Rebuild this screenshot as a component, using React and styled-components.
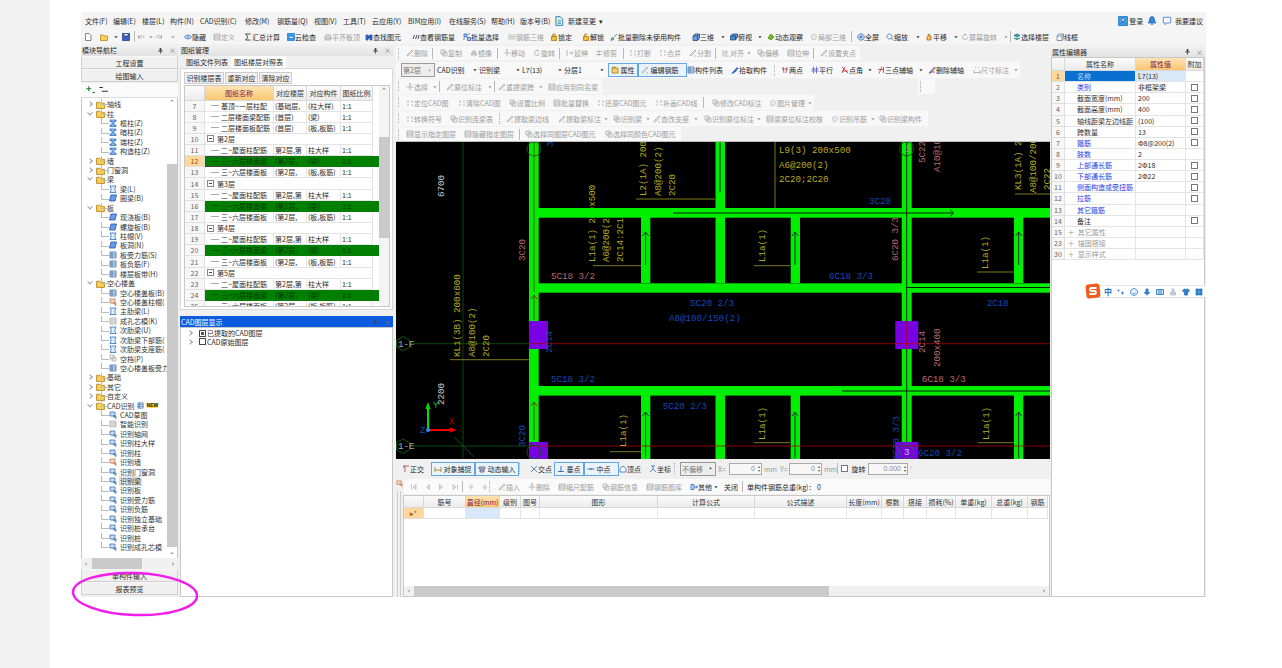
import React from 'react';
import styled, { createGlobalStyle } from 'styled-components';

const GlobalStyle = createGlobalStyle`
  html, body { margin: 0; padding: 0; background: #fff; overflow: hidden; }
  * { box-sizing: border-box; }
  body { font-family: "Noto Sans CJK SC", "Noto Sans", sans-serif; font-size: 7px; color: #2a2a2a; }
`;

// little toolbar pictures, all in an 8x8 box
const G = {
  doc: { d: 'M1.5.5h3.5l2 2v5h-5.5z', s: '#667', f: '#fff' },
  folder: { d: 'M.5 2h3l1 1h3v4.5h-7z', s: '#b88a20', f: '#f6cf5a' },
  save: { d: 'M.5.5h7v7h-7zM2 .5v2.5h4V.5', s: '#23408a', f: '#3a62c0' },
  undo: { d: 'M2 4.5C3 2 6 2 7 5M1.5 2v3h3', s: '#999' },
  redo: { d: 'M6 4.5C5 2 2 2 1 5M6.5 2v3h-3', s: '#999' },
  eye: { d: 'M.5 4C2 1.5 6 1.5 7.5 4 6 6.5 2 6.5.5 4zM4 3v2', s: '#2a70c0', f: '#cfe4f8' },
  page: { d: 'M1 1h6v6H1zM1 3h6M1 5h6', s: '#aaa', f: '#eee' },
  sig: { d: 'M6.5 1H1.5L4 4 1.5 7h5', s: '#222' },
  cloud: { d: 'M.5.5h7v7h-7zM2 5.5h4C7 4 5.5 3 4.5 3.5 3.5 2.5 2 3.5 2 5.5z', s: '#1f7fd0', f: '#3a9ae8' },
  wall: { d: 'M1 7V3l3-2 3 2v4zM1 5h6', s: '#aaa', f: '#ddd' },
  binoc: { d: 'M1 2h2v5H1zM5 2h2v5H5zM3 3h2v2H3z', s: '#1d4fa8', f: '#3f7ad8' },
  bars: { d: 'M1 6l1.5-4M3.5 6L5 2M6 6l1-4', s: '#224' },
  sel: { d: 'M1 1h3v3H1zM4.5 4.5h3v3h-3zM5 1h2M1 5v2', s: '#2a60b8', f: '#a8c8f0' },
  grid: { d: 'M1 1v6M3 1v6M5 1v6M7 1v6M1 4h6', s: '#bbb' },
  lock: { d: 'M2.5 3.5V2.2C2.5.5 5.5.5 5.5 2.2v1.3M1.5 3.5h5v4h-5z', s: '#a87810', f: '#f2c040' },
  unlock: { d: 'M2.5 3.5V2C2.5.6 5 .6 5.3 1.6M1.5 3.5h5v4h-5z', s: '#a87810', f: '#f2c040' },
  broom: { d: 'M7 1L3.5 4.5M1 7.5l1-3 2 1.5-3 1.5', s: '#2a70c0', f: '#e8c040' },
  cube: { d: 'M1 3l2-2h4.5v4.5l-2 2H1zM1 3h4.5v4.5M5.5 3l2-2', s: '#24508c', f: '#6f9ed8' },
  box: { d: 'M.5 3l2-2h5v3l-2 3H.5zM.5 3h5v4', s: '#24508c', f: '#4f86cc' },
  orbit: { d: 'M1 5l3-4 3 3-3 3z', s: '#4a8a18', f: '#78b828' },
  part: { d: 'M1.5 2.5l3-1.5 2 2-1 3-3 1z', s: '#bbb', f: '#eee' },
  fit: { d: 'M4 .8a3.2 3.2 0 1 0 .01 0zM4 2v4M2 4h4M6.5 6.5L7.8 7.8', s: '#2a60a8', f: '#d8e8f8' },
  mag: { d: 'M3.5 1a2.5 2.5 0 1 0 .01 0zM5.3 5.3L7.5 7.5', s: '#3a70b0', f: '#eef6ff' },
  hand: { d: 'M2 7V4h1V1.5h1.5V3H6v4z', s: '#a86810', f: '#f4c868' },
  rot: { d: 'M6.5 4A2.5 2.5 0 1 1 4 1.5H5M4.5.5l1 1-1 1', s: '#aaa' },
  layer: { d: 'M1 2.5L4 1l3 1.5L4 4zM1 5l3 1.5L7 5', s: '#187a70', f: '#38a0d0' },
  wire: { d: 'M1 3l1.5-2h5v4.5L6 7.5H1zM1 3h5v4.5M6 3l1.5-2', s: '#5a80b0' },
  pen: { d: 'M1 7l1-2 4-4 1 1-4 4zM5 7h2', s: '#aaa', f: '#eee' },
  copy: { d: 'M1 1h4v4H1zM3 3h4v4H3z', s: '#aaa', f: '#f4f4f4' },
  mirror: { d: 'M4 .5v7M3 2L1 6h2zM5 2l2 4H5z', s: '#aaa' },
  move: { d: 'M4 .5v7M.5 4h7M2.8 1.6L4 .5l1.2 1.1', s: '#aaa' },
  ext: { d: 'M1 1v6M3 4h4M5.5 2.5L7 4 5.5 5.5', s: '#aaa' },
  trim: { d: 'M4 .5v7M1 2.5h6M1 5.5h6', s: '#aaa' },
  brk: { d: 'M1 3h2M5 3h2M1 6h2M5 6h2M2 1v1M6 1v1', s: '#aaa' },
  align: { d: 'M1 1v6h6M3 2h2v3H3z', s: '#aaa' },
  lines: { d: 'M1 1h6v6H1zM1 3h6M1 5h6M3 1v6', s: '#3b6ea8', f: '#eef4fb' },
  pick: { d: 'M1 7.5L3 5 6 1.5l1 1L4 6z', s: '#1d58b0', f: '#3a7ee0' },
  axis2: { d: 'M2 1l1 6M6 1L5 7M1 3h6', s: '#a04050' },
  par: { d: 'M2.5.5v7M5.5.5v7M.5 3h7M.5 5h7', s: '#5060c0' },
  ang: { d: 'M1 7l3-6M1 1l6 6M1 5h6', s: '#c02840' },
  tri: { d: 'M1 3.5h6M5 .5L2 7.5M6.5 1v6', s: '#d03030' },
  del: { d: 'M1 7L6.5 1l1 1L2 7.5zM2 6h5', s: '#6050b0', f: '#e8d050' },
  dim: { d: 'M1 6.5h6M1 4v4M7 4v4M2 1.5h1M5 1.5h1', s: '#aaa' },
  cross: { d: 'M1 1l6 6M7 1L1 7', s: '#2a70c0' },
  perp: { d: 'M1 6.5h6M4 1v5.5', s: '#1a50a0' },
  mid: { d: 'M.5 4h7M4 3v2', s: '#1a50a0' },
  house: { d: 'M4 1l3 2.5V7H1V3.5z', s: '#2a70c0', f: '#fff' },
  coord: { d: 'M4 1v3M1 7l3-3 3 3M2 1h4', s: '#2a70c0' },
  ortho: { d: 'M1 1h6M3 1v6M1 3l2-2', s: '#b04050' },
  snap: { d: 'M1 7V2M7 7V2M1 5h6', s: '#a87810', f: '#f2d070' },
  dyn: { d: 'M1 2h6v2H1zM2 5h4v2H2z', s: '#557', f: '#ccd' },
  first: { d: 'M1.5 1.5v5M6 1.5L3 4l3 2.5z', s: '#bbb', f: '#ddd' },
  prev: { d: 'M5.5 1.5L2.5 4l3 2.5z', s: '#bbb', f: '#ddd' },
  next: { d: 'M2.5 1.5L5.5 4l-3 2.5z', s: '#bbb', f: '#ddd' },
  last: { d: 'M6.5 1.5v5M2 1.5L5 4 2 6.5z', s: '#bbb', f: '#ddd' },
  up: { d: 'M4 1.5L2 4h4zM4 4v3', s: '#bbb' },
  down: { d: 'M4 6.5L2 4h4zM4 4V1', s: '#bbb' },
  other: { d: 'M1 1.5h3v5H1zM4 4h3.5M6 2.5L7.5 4 6 5.5', s: '#2a70c0', f: '#bcd8f4' },
  attr: { d: 'M1 2h6v5H1zM1 2l1-1h2l1 1', s: '#a87810', f: '#f4d070' },
  drop: { d: 'M2.4 3.2h3.2L4 5.2z', f: '#333' },
  dropDim: { d: 'M2.4 3.2h3.2L4 5.2z', f: '#999' },
  plus: { d: 'M3 1v4M1 3h4M6 6h2', s: '#187a30' },
  minus: { d: 'M1 2h3M3 5h5', s: '#334' },
  pil: { d: 'M1 1h6v1.5H5V6h2v1.5H1V6h2V2.5H1z', s: '#3070c0', f: '#8fc0f0' },
  beam: { d: 'M1 1h6l-1 2.5v2l1 2H1l1-2v-2z', s: '#3070c0', f: '#dceeff' },
  slab: { d: 'M2 1h5.5L6 7H.5z', s: '#2050b0', f: '#6a9ae8' },
  cad: { d: 'M1 1h5v4H1zM4 5l3 2.5V5z', s: '#3a70b0', f: '#c8dcf4' },
  wallp: { d: 'M1 1h5v4H1zM4 5l3 2.5V5z', s: '#c07850', f: '#f4d8c0' },
  pin: { d: 'M3 1h2v3h1.5v1h-2v2.5H3.5V5h-2V4H3z', f: '#444' },
  bell: { d: 'M4 .5C2 .5 2 3 2 4L1 5.500h6L6 4C6 3 6 .5 4 .5zM3 6.500h2', s: '#1f6fc0', f: '#3a88d8' },
  user: { d: 'M.5.5h7v7h-7zM4 1.800a1.200 1.200 0 1 0 .01 0zM2 6.500c0-2 4-2 4 0', s: '#1f78c8', f: '#4aa0e0' },
  note: { d: 'M1 1h6v4.500H4L2.500 7V5.500H1z', s: '#5a90d0', f: '#f4f8fc' },
  newdoc: { d: 'M1.500.5h3.500l2 2v5h-5.500zM3 4h2.500M3 5.800h2.500', s: '#2f8ad0', f: '#dff0c8' },
};

const Svg = styled.svg`
  flex: 0 0 ${p => p.$s}px;
  width: ${p => p.$s}px;
  height: ${p => p.$s}px;
  display: block;
`;

const Glyph = ({ k, size = 8 }) => {
  const g = G[k];
  if (!g) return null;
  return (
    <Svg $s={size} viewBox="0 0 8 8">
      <path d={g.d} fill={g.f || 'none'} stroke={g.s || 'none'} strokeWidth=".8" />
    </Svg>
  );
};

// turn x positions read off the screen into item widths
const spaced = (list, end) => list.map((it, i) => ({
  x: it[0], k: it[1], t: it[2], o: it[3] || {},
  w: (i + 1 < list.length ? list[i + 1][0] : end) - it[0],
}));

// STYLES -------------

const Page = styled.div`
  display: flex;
  height: 668px;
`;
const SideStripe = styled.div`
  flex: 0 0 50px;
  background: #f1f1f1;
`;
const Main = styled.div`
  padding: 12px 0 0 31px;
`;
const Win = styled.div`
  position: relative;
  width: 1125px;
  height: 585px;
  background: #f0f0f0;
  display: flex;
  flex-direction: column;
  filter: blur(.5px);
`;
const MenuBar = styled.div`
  flex: 0 0 17px;
  display: flex;
  align-items: center;
  padding-left: 4px;
  background: #f4f4f4;
`;
const MenuItem = styled.span`
  flex: 0 0 ${p => p.$w}px;
  white-space: nowrap;
  display: flex;
  align-items: center;
`;
const RightMenu = styled.div`
  margin-left: auto;
  display: flex;
  align-items: center;
  gap: 1px;
  padding-right: 3px;
`;
const TopBar = styled.div`
  flex: 0 0 15px;
  display: flex;
  align-items: center;
  padding-left: 3px;
  background: #f5f5f5;
`;
const Body = styled.div`
  flex: 1;
  display: flex;
  min-height: 0;
`;

const Tool = styled.span`
  flex: 0 0 ${p => p.$w}px;
  display: flex;
  align-items: center;
  white-space: nowrap;
  color: ${p => (p.$dim ? '#9c9c9c' : '#262626')};
`;
const BoxTool = styled.span`
  flex: 0 0 ${p => p.$w}px;
  height: 14px;
  display: flex;
  align-items: center;
  padding-left: 2px;
  white-space: nowrap;
  border: 1px solid #62a6e4;
  background: #eaf2fa;
  color: #262626;
`;
const Sep = styled.i`
  flex: 0 0 ${p => p.$w}px;
  height: 11px;
  display: block;
  background: linear-gradient(#b8b8b8, #b8b8b8) left center / 1px 100% no-repeat;
`;
const Handle = styled.i`
  flex: 0 0 ${p => p.$w}px;
  height: 11px;
  display: block;
  background: repeating-linear-gradient(#aaa 0 1px, transparent 1px 2px) left center / 1px 100% no-repeat;
`;
const SelectBox = styled.span`
  flex: 0 0 ${p => p.$w}px;
  height: 14px;
  display: flex;
  align-items: center;
  justify-content: space-between;
  padding: 0 1px;
  border: 1px solid #999;
  background: #ededed;
  color: #777;
`;

const Col = styled.div`
  flex: 0 0 ${p => p.$w}px;
  margin-right: ${p => p.$mr || 0}px;
  padding-top: ${p => p.$pt || 0}px;
  display: flex;
  flex-direction: column;
  min-height: 0;
  min-width: 0;
`;
const TitleBar = styled.div`
  flex: 0 0 ${p => p.$h || 12}px;
  display: flex;
  align-items: center;
  justify-content: space-between;
  padding: 0 2px 0 1px;
  background: ${p => (p.$active ? '#0c5ce0' : 'linear-gradient(#f2f2f2, #e2e2e2)')};
  color: ${p => (p.$active ? '#fff' : '#2a2a2a')};
`;
const TitleBtns = styled.span`
  display: flex;
  align-items: center;
  gap: 5px;
  color: #777;
`;

const NavBtn = styled.div`
  flex: 0 0 13px;
  display: flex;
  align-items: center;
  justify-content: center;
  background: #f0f0f0;
  border: 1px solid #d0d0d0;
  border-top-color: #f8f8f8;
`;
const TreeTools = styled.div`
  flex: 0 0 15px;
  display: flex;
  align-items: center;
  gap: 3px;
  padding-left: 4px;
  background: #fafafa;
  border-bottom: 1px solid #ddd;
  margin-top: 1px;
`;
const TreeBox = styled.div`
  flex: 0 0 460px;
  display: flex;
  background: #fff;
  border-left: 1px solid #c8c8c8;
  border-right: 1px solid #c8c8c8;
`;
const TreeList = styled.div`
  flex: 1;
  padding-top: 1.4px;
  overflow: hidden;
  min-width: 0;
`;
const TreeRow = styled.div`
  position: relative;
  height: 9.43px;
  display: flex;
  align-items: center;
  gap: ${p => (p.$lv ? 2 : 1)}px;
  white-space: nowrap;
  padding-left: ${p => (p.$lv ? 27 : 6)}px;
  color: #333;
  &::before {
    content: '${p => (p.$lv ? ' ' : '')}';
    position: absolute;
    left: 19px;
    top: 0;
    width: 7px;
    height: 5px;
    border-left: 1px solid #bbb;
    border-bottom: 1px solid #bbb;
  }
`;
const Chevron = styled.i`
  flex: 0 0 4px;
  width: 4px;
  height: 4px;
  margin-right: 3px;
  border-right: 1px solid #999;
  border-bottom: 1px solid #999;
  transform: ${p => (p.$open ? 'rotate(45deg) translate(-1px,-1px)' : 'rotate(-45deg)')};
`;
const TreeLabel = styled.span`
  background: ${p => (p.$sel ? '#e2e2e2' : 'transparent')};
  padding: 0 1px;
`;
const NewMark = styled.span`
  display: flex;
  align-items: flex-start;
  margin-left: 2px;
  font: bold 5px "Liberation Sans", sans-serif;
  color: #111;
  background: #f0e040;
  line-height: 5px;
`;
const VBar = styled.div`
  flex: 0 0 ${p => p.$w}px;
  display: flex;
  flex-direction: column;
  align-items: stretch;
  background: ${p => p.$bg || '#fff'};
`;
const VThumb = styled.div`
  flex: 0 0 ${p => p.$h}px;
  margin-top: ${p => p.$top}px;
  background: #cacaca;
`;
const Arrow = styled.div`
  flex: 0 0 10px;
  display: flex;
  align-items: center;
  justify-content: center;
  font: 7px "DejaVu Sans", sans-serif;
  color: #666;
  background: ${p => p.$bg || 'transparent'};
`;
const HBar = styled.div`
  flex: 0 0 ${p => p.$h || 10}px;
  display: flex;
  align-items: center;
  background: #f0f0f0;
  margin-top: ${p => (p.$auto ? 'auto' : '0')};
`;
const HThumb = styled.div`
  flex: 0 0 ${p => p.$w}px;
  margin-left: ${p => p.$ml || 0}px;
  height: 100%;
  background: #cacaca;
`;
const HEnd = styled.div`
  margin-left: auto;
  flex: 0 0 10px;
  font: 7px "DejaVu Sans", sans-serif;
  text-align: center;
  color: #555;
`;

const Tabs = styled.div`
  flex: 0 0 12px;
  display: flex;
  align-items: stretch;
  padding-left: 3px;
  background: #f0f0f0;
`;
const Tab = styled.div`
  display: flex;
  align-items: center;
  padding: 0 3px;
  background: ${p => (p.$on ? '#fff' : 'transparent')};
`;
const ManagerBody = styled.div`
  flex: 1;
  min-height: 0;
  padding: 3px 2px 2px 3px;
  background: #fff;
  border: 1px solid #d8d8d8;
  display: flex;
  flex-direction: column;
  overflow: hidden;
`;
const SmallBtns = styled.div`
  flex: 0 0 12px;
  display: flex;
  gap: 1px;
  margin-bottom: 1px;
`;
const SmallBtn = styled.div`
  flex: 0 0 ${p => p.$w}px;
  display: flex;
  align-items: center;
  justify-content: center;
  background: #f2f2f2;
  border: 1px solid #ccc;
`;
const GridWrap = styled.div`
  flex: 1;
  min-height: 0;
  display: flex;
  border: 1px solid #c8c8c8;
  overflow: hidden;
`;
const GridMain = styled.div`
  flex: 1;
  min-width: 0;
  overflow: hidden;
`;
const Row = styled.div`
  display: flex;
  height: ${p => p.$h || 11.15}px;
  background: ${p => (p.$green ? '#008000' : '#fff')};
  color: ${p => (p.$green ? '#013a01' : 'inherit')};
`;
const Cell = styled.div`
  flex: 0 0 ${p => p.$w}px;
  display: flex;
  align-items: center;
  justify-content: ${p => (p.$center ? 'center' : 'flex-start')};
  padding-left: ${p => (p.$center ? 0 : p.$pl || 1)}px;
  white-space: nowrap;
  overflow: hidden;
  border-right: 1px solid ${p => (p.$green ? '#0a7a0a' : '#e4e4e4')};
  border-bottom: 1px solid ${p => (p.$green ? '#0a7a0a' : '#e4e4e4')};
  background: ${p => p.$bg || 'transparent'};
  color: ${p => p.$c || 'inherit'};
  outline: ${p => (p.$ring ? '1px solid #444' : 'none')};
  outline-offset: -1px;
`;
const Head = styled(Cell)`
  background: ${p => (p.$on ? 'linear-gradient(#fde4b4, #f9c66e)' : 'linear-gradient(#fbfbfb, #ececec)')};
  color: ${p => (p.$on ? '#7d1a55' : '#333')};
  border-color: #d8d8d8;
`;
const NumCell = styled(Cell)`
  background: ${p => (p.$on ? '#fdd79c' : '#f7f7f7')};
  color: ${p => (p.$on ? '#a05010' : '#666')};
  border-color: #e0e0e0;
`;
const Dash = styled.i`
  flex: 0 0 ${p => p.$w}px;
  height: 1px;
  margin-right: 2px;
  background: ${p => p.$c || '#aaa'};
`;
const Expand = styled.i`
  flex: 0 0 7px;
  height: 7px;
  margin: 0 3px 0 1px;
  border: 1px solid #888;
  background: linear-gradient(#444, #444) center / 3px 1px no-repeat, #fff;
`;

const LayerBody = styled.div`
  flex: 1;
  padding: 1px 0 0 7px;
  background: #fff;
  border: 1px solid #c8c8c8;
`;
const LayerRow = styled.div`
  height: 8.5px;
  display: flex;
  align-items: center;
  gap: 1px;
`;
const LayerBox = styled.i`
  flex: 0 0 7px;
  height: 7px;
  margin-left: 3px;
  border: 1px solid #444;
  background: ${p => (p.$on ? 'linear-gradient(#555, #555) center / 3px 3px no-repeat, #fff' : '#fff')};
`;

const ToolRow = styled.div`
  flex: 0 0 ${p => p.$h}px;
  margin-bottom: ${p => p.$mb || 0}px;
  display: flex;
  align-items: stretch;
`;
const Strip = styled.div`
  display: flex;
  align-items: center;
  padding-left: ${p => p.$pl}px;
  background: #f8f8f8;
`;
const FloatGrip = styled.div`
  flex: 0 0 17px;
  margin-left: ${p => p.$ml}px;
  padding: 2px 0 0 2px;
  background: #f9f9f9;
`;
const Canvas = styled.div`
  flex: 0 0 318px;
  background: #000;
  border-top: 1px solid #bbb;
`;
const CadSvg = styled.svg`
  display: block;
  width: 654px;
  height: 317px;
`;
const SnapRow = styled.div`
  flex: 0 0 15px;
  margin: 2px 0 3px;
  display: flex;
  align-items: center;
  padding-left: 6px;
`;
const SpinBox = styled.span`
  flex: 0 0 ${p => p.$w}px;
  height: 12px;
  display: flex;
  align-items: center;
  justify-content: flex-end;
  gap: 3px;
  padding-right: 1px;
  border: 1px solid #aaa;
  background: #f7f7f7;
  color: #888;
  font-family: "Liberation Sans", sans-serif;
`;
const SpinArrows = styled.span`
  display: flex;
  flex-direction: column;
  font: 4px/4px "DejaVu Sans", sans-serif;
  color: #555;
`;
const Unit = styled.span`
  flex: 0 0 ${p => p.$w}px;
  color: ${p => (p.$dark ? '#262626' : '#999')};
  white-space: nowrap;
  padding-left: 2px;
`;
const CheckBox = styled.i`
  flex: 0 0 7px;
  height: 7px;
  display: block;
  border: 1px solid #777;
  background: #fff;
`;
const SteelArea = styled.div`
  flex: 1;
  min-height: 0;
  display: flex;
`;
const GripCol = styled.div`
  flex: 0 0 7px;
  padding: 1px 0 0 0;
  background: repeating-linear-gradient(90deg, #ccc 0 1px, transparent 1px 3px) 1px 12px / 6px 100% no-repeat;
`;
const SteelMain = styled.div`
  flex: 1;
  min-width: 0;
  display: flex;
  flex-direction: column;
`;
const SteelBar = styled.div`
  flex: 0 0 15px;
  margin-left: 1px;
  display: flex;
  align-items: center;
  padding-left: 6px;
  background: #fafafa;
`;
const SteelTable = styled.div`
  flex: 1;
  min-height: 0;
  margin-top: 1px;
  display: flex;
  flex-direction: column;
  border: 1px solid #c8c8c8;
  background: #fff;
`;
const PropBody = styled.div`
  flex: 1;
  background: #fff;
  border: 1px solid #c8c8c8;
  overflow: hidden;
`;
const ImeBar = styled.div`
  position: absolute;
  left: 1005px;
  top: 273px;
  width: 120px;
  height: 13px;
  display: flex;
  align-items: center;
  padding-left: 18px;
  gap: 5px;
  background: #fff;
  border-top: 1px solid #e6e6e6;
  border-bottom: 1px solid #dcdcdc;
`;
const ImeLogo = styled.svg`
  position: absolute;
  left: -1px;
  top: -3px;
  width: 16px;
  height: 16px;
`;
const ImeZh = styled.span`
  flex: 0 0 8px;
  font-size: 8px;
  font-weight: 700;
  color: #1d78c8;
  line-height: 8px;
`;
const Ellipse = styled.svg`
  position: absolute;
  left: -12px;
  top: 558px;
  width: 132px;
  height: 50px;
  overflow: visible;
`;

// DATA -------------

const menus = [
  ['文件(F)', 28], ['编辑(E)', 29], ['楼层(L)', 28], ['构件(N)', 30], ['CAD识别(C)', 45], ['修改(M)', 32],
  ['钢筋量(Q)', 37], ['视图(V)', 29], ['工具(T)', 29], ['云应用(Y)', 36], ['BIM应用(I)', 41], ['在线服务(S)', 42],
  ['帮助(H)', 29], ['版本号(B)', 34],
];

const d = { dim: true };
const topTools = spaced([
  [84, 'doc'], [100, 'folder'], [112, 'drop'], [122, 'save'], [134, 'sep'], [137, 'undo', '', d], [147, 'dropDim'], [154, 'redo', '', d], [168, 'dropDim'],
  [183, 'eye', '隐藏'], [212, 'page', '定义', d], [243, 'sig', '汇总计算'], [286, 'cloud', '云检查'], [323, 'wall', '平齐板顶', d], [364, 'binoc', '查找图元'],
  [411, 'bars', '查看钢筋量'], [462, 'sel', '批量选择'], [507, 'grid', '钢筋三维', d], [549, 'lock', '锁定'], [581, 'unlock', '解锁'], [609, 'broom', '批量删除未使用构件'],
  [691, 'cube', '三维'], [718, 'drop'], [729, 'box', '俯视'], [755, 'drop'], [766, 'orbit', '动态观察'], [809, 'part', '局部三维', d], [850, 'sep'],
  [856, 'fit', '全屏'], [885, 'mag', '缩放'], [913, 'drop'], [924, 'hand', '平移'], [951, 'drop'], [960, 'rot', '屏幕旋转', d], [1001, 'dropDim'], [1009, 'sep'],
  [1012, 'layer', '选择楼层'], [1055, 'wire', '线框'],
], 1082);

const row1 = spaced([
  [398, 'handle'], [406, 'pen', '删除', d], [432, 'sep'], [440, 'copy', '复制', d], [470, 'mirror', '镜像', d], [497, 'sep'], [503, 'move', '移动', d], [533, 'rot', '旋转', d], [559, 'sep'],
  [566, 'ext', '延伸', d], [595, 'trim', '修剪', d], [623, 'sep'], [629, 'brk', '打断', d], [659, 'brk', '合并', d], [689, 'pen', '分割', d], [715, 'sep'],
  [722, 'align', '对齐', d], [745, 'dropDim'], [757, 'copy', '偏移', d], [787, 'page', '拉伸', d], [813, 'sep'], [820, 'pen', '设置夹点', d],
], 860);

const row2 = spaced([
  [437, '', 'CAD识别'], [471, 'drop'], [479, '', '识别梁'], [514, 'drop'], [522, '', 'L7(13)'], [556, 'drop'], [564, '', '分层1'], [598, 'drop'],
  [608, 'attr', '属性', { box: true }], [638, 'pen', '编辑钢筋', { box: true, on: true }], [687, 'lines', '构件列表'], [731, 'pick', '拾取构件'], [774, 'handle'],
  [781, 'axis2', '两点'], [811, 'par', '平行'], [841, 'ang', '点角'], [866, 'drop'], [877, 'tri', '三点辅轴'], [917, 'drop'], [928, 'del', '删除辅轴'], [973, 'dim', '尺寸标注', d], [1012, 'dropDim'],
], 1020);

const row3 = spaced([
  [398, 'handle'], [406, 'move', '选择', d], [431, 'dropDim'], [439, 'sep'], [446, 'pen', '原位标注', d], [486, 'dropDim'], [494, 'sep'], [498, 'pen', '重提梁跨', d], [537, 'dropDim'], [548, 'page', '应用到同名梁', d],
], 602);

const row4 = spaced([
  [398, 'handle'], [406, 'brk', '定位CAD图', d], [458, 'brk', '清除CAD图', d], [509, 'copy', '设置比例', d], [553, 'page', '批量替换', d], [597, 'brk', '还原CAD图元', d],
  [655, 'brk', '补画CAD线', d], [703, 'sep'], [712, 'copy', '修改CAD标注', d], [769, 'part', '图片管理', d], [806, 'dropDim'],
], 813);

const row5 = spaced([
  [398, 'handle'], [406, 'brk', '转换符号', d], [450, 'copy', '识别连梁表', d], [499, 'handle'], [506, 'pen', '提取梁边线', d], [558, 'pen', '提取梁标注', d], [602, 'dropDim'],
  [613, 'copy', '识别梁', d], [644, 'dropDim'], [653, 'pen', '查改支座', d], [692, 'dropDim'], [704, 'copy', '识别原位标注', d], [755, 'dropDim'], [766, 'page', '梁原位标注校核', d],
  [831, 'part', '识别吊筋', d], [869, 'dropDim'], [879, 'copy', '识别梁构件', d],
], 928);

const row6 = spaced([
  [398, 'handle'], [406, 'page', '显示指定图层', d], [464, 'page', '隐藏指定图层', d], [519, 'sep'], [525, 'copy', '选择同图层CAD图元', d], [605, 'copy', '选择同颜色CAD图元', d],
], 681);

const snapLeft = spaced([
  [402, 'ortho', '正交'], [431, 'snap', '对象捕捉', { box: true }], [475, 'dyn', '动态输入', { box: true }], [519, 'handle'], [530, 'cross', '交点'],
  [554, 'perp', '垂点', { box: true }], [584, 'mid', '中点', { box: true }], [619, 'house', '顶点'], [649, 'coord', '坐标'], [674, 'handle'],
], 680);

const steelTools = spaced([
  [410, 'first'], [424, 'prev'], [437, 'next'], [451, 'last'], [462, 'sep'], [467, 'up'], [481, 'down'], [488, 'handle'], [497, 'pen', '插入', d], [527, 'move', '删除', d],
  [557, 'page', '缩尺配筋', d], [601, 'copy', '钢筋信息', d], [645, 'page', '钢筋图库', d], [689, 'other', '其他'], [708, 'drop'], [720, '', '关闭'], [738, 'sep'], [743, '', '单构件钢筋总重(kg)： 0'],
], 860);

const tree = [
  ['轴线', 0], ['柱', 0, 1], ['框柱(Z)', 1, 'pil'], ['暗柱(Z)', 1, 'pil'], ['端柱(Z)', 1, 'pil'], ['构造柱(Z)', 1, 'pil'],
  ['墙', 0], ['门窗洞', 0], ['梁', 0, 1], ['梁(L)', 1, 'beam'], ['圈梁(B)', 1, 'slab'], ['板', 0, 1], ['现浇板(B)', 1, 'slab'], ['螺旋板(B)', 1, 'slab'],
  ['柱帽(V)', 1, 'beam'], ['板洞(N)', 1, 'slab'], ['板受力筋(S)', 1, 'lines'], ['板负筋(F)', 1, 'lines'], ['楼层板带(H)', 1, 'lines'],
  ['空心楼盖', 0, 1], ['空心楼盖板(B)', 1, 'lines'], ['空心楼盖柱帽(', 1, 'wallp'], ['主肋梁(L)', 1, 'beam'], ['成孔芯模(K)', 1, 'page'], ['次肋梁(U)', 1, 'beam'],
  ['次肋梁下部筋(', 1, 'beam'], ['次肋梁支座筋(', 1, 'beam'], ['空档(P)', 1, 'copy'], ['空心楼盖板受力', 1, 'lines'],
  ['基础', 0], ['其它', 0], ['自定义', 0], ['CAD识别', 0, 1, 'new'],
  ['CAD草图', 1, 'cad'], ['智能识别', 1, 'page'], ['识别轴网', 1, 'cad'], ['识别柱大样', 1, 'cad'], ['识别柱', 1, 'cad'], ['识别墙', 1, 'wallp'], ['识别门窗洞', 1, 'cad'],
  ['识别梁', 1, 'cad', 'sel'], ['识别板', 1, 'cad'], ['识别受力筋', 1, 'cad'], ['识别负筋', 1, 'cad'], ['识别独立基础', 1, 'cad'], ['识别桩承台', 1, 'cad'], ['识别桩', 1, 'cad'], ['识别成孔芯模', 1, 'cad'],
];

const floorCols = [20, 69, 33, 34, 32, 9];
const floorRows = [
  [7, '基顶~一层柱配', '(基础层,', '(柱大样)'],
  [8, '二层楼面梁配筋', '(首层)', '(梁)'],
  [9, '二层楼面板配筋', '(首层)', '(板,板筋)'],
];
[2, 3, 4, 5].forEach((f, i) => {
  const n = 10 + i * 4;
  floorRows.push([n, `第${f}层`, null]);
  floorRows.push([n + 1, '二~屋面柱配筋', '第2层,第', '柱大样']);
  floorRows.push([n + 2, '三~六层楼面梁', '(第2层,', '(梁)', 1]);
  floorRows.push([n + 3, '三~六层楼面板', '(第2层,', '(板,板筋)']);
});
floorRows.length = 19;

const steelCols = [
  ['', 20], ['筋号', 42], ['直径(mm)', 34, 1], ['级别', 21], ['图号', 19], ['图形', 118], ['计算公式', 97], ['公式描述', 92],
  ['长度(mm)', 35], ['根数', 22], ['搭接', 23], ['损耗(%)', 29], ['单重(kg)', 36], ['总重(kg)', 36], ['钢筋', 20],
];

const props = [
  [1, '名称', 'L7(13)', 0, 0],
  [2, '类别', '非框架梁', 1, 1],
  [3, '截面宽度(mm)', '200', 0, 1],
  [4, '截面高度(mm)', '400', 0, 1],
  [5, '轴线距梁左边线距', '(100)', 0, 1],
  [6, '跨数量', '13', 0, 1],
  [7, '箍筋', 'Φ8@200(2)', 1, 1],
  [8, '肢数', '2', 1, 0],
  [9, '上部通长筋', '2Φ18', 1, 1],
  [10, '下部通长筋', '2Φ22', 1, 1],
  [11, '侧面构造或受扭筋', '', 1, 1],
  [12, '拉筋', '', 1, 1],
  [13, '其它箍筋', '', 1, 0],
  [14, '备注', '', 0, 1],
];

// PARTS -------------

const Item = ({ it, dimAll }) => {
  if (it.k === 'sep') return <Sep $w={it.w} />;
  if (it.k === 'handle') return <Handle $w={it.w} />;
  if (it.o.box) return <BoxTool $w={it.w}><Glyph k={it.k} />&nbsp;{it.t}</BoxTool>;
  return <Tool $w={it.w} $dim={it.o.dim || dimAll}><Glyph k={it.k} />{it.t}</Tool>;
};

const Items = ({ list }) => list.map(it => <Item key={it.x} it={it} />);

const Title = ({ children, active, h }) => (
  <TitleBar $active={active} $h={h}>
    <span>{children}</span>
    <TitleBtns><Glyph k="pin" size={7} />×</TitleBtns>
  </TitleBar>
);

const Spin = ({ w, v }) => (
  <SpinBox $w={w}>{v}<SpinArrows><span>▴</span><span>▾</span></SpinArrows></SpinBox>
);

const CAD_Y = '#b4ac24';
const CAD_P = '#b86a6a';
const CAD_B = '#1248b8';
const GREEN = '#00ee00';

const V = ({ x, y, c = CAD_Y, children }) => (
  <text x={x + 3} y={y} fill={c} fontFamily="Liberation Mono, monospace" fontSize="9.2" transform={`rotate(-90 ${x + 3} ${y})`}>{children}</text>
);
const H = ({ x, y, c = CAD_B, children }) => (
  <text x={x} y={y + 3} fill={c} fontFamily="Liberation Mono, monospace" fontSize="9.2">{children}</text>
);
const Rect = ({ x1, x2, y1, y2, c = GREEN }) => <rect x={x1} y={y1} width={x2 - x1} height={y2 - y1} fill={c} />;
const UpArrow = ({ x, y1, y2, c = '#123' }) => (
  <path d={`M${x} ${y1}V${y2}M${x - 3} ${y2 + 4}L${x} ${y2}L${x + 3} ${y2 + 4}`} stroke={c} strokeWidth=".9" fill="none" />
);

const CadDrawing = () => (
  <CadSvg viewBox="396 142 654 317">
    {/* notes that the beams run over */}
    <V x={592} y={262}>L1a(1)  200x500</V>
    <V x={605.5} y={262}>A6@200(2)</V>
    <V x={620} y={262}>2C14:2C14</V>

    {/* beams */}
    <Rect x1={529} x2={538.7} y1={142} y2={459} />
    <Rect x1={901.7} x2={911.7} y1={142} y2={459} />
    <Rect x1={715.5} x2={725} y1={142} y2={283} />
    <Rect x1={715.5} x2={725} y1={395} y2={459} />
    <Rect x1={529} x2={1050} y1={208} y2={217.7} />
    <Rect x1={529} x2={1050} y1={283.3} y2={292.7} />
    <Rect x1={529} x2={1050} y1={386} y2={395.6} />
    {[641, 790.7, 1014].map(x => (
      <g key={x}>
        <Rect x1={x} x2={x + 9.3} y1={217} y2={283} />
        <Rect x1={x} x2={x + 9.3} y1={395} y2={459} />
      </g>
    ))}
    <path d="M673 213H953M950 209.5L953.5 213L950 216.5M906.7 142V459M907 287.5H1050M842 391H1050M720 142V192" stroke="#062006" strokeWidth="1" fill="none" />
    {[645.6, 795, 1018.6].map(x => (
      <g key={x}>
        <UpArrow x={x} y1={265} y2={232} />
        <UpArrow x={x} y1={458} y2={412} />
      </g>
    ))}
    <UpArrow x={534} y1={320} y2={295} c="#7a2a10" />
    <UpArrow x={534} y1={440} y2={402} c="#7a2a10" />
    <path d="M534 142V292" stroke="#7a3a10" strokeWidth=".8" />

    {/* columns */}
    <Rect x1={529} x2={548} y1={321} y2={349} c="#7a00e4" />
    <Rect x1={529} x2={548} y1={442} y2={459} c="#7a00e4" />
    <Rect x1={895.3} x2={918.3} y1={321} y2={349} c="#7a00e4" />
    <Rect x1={895.3} x2={918.3} y1={442} y2={459} c="#7a00e4" />

    {/* axis lines */}
    <path d="M411 343.7H530M411 446H530M463 142V459" stroke="#0c5a0c" strokeWidth=".8" fill="none" />
    <path d="M530 343.7H1050M530 446H1050M906.7 321V349" stroke="#b00000" strokeWidth=".8" fill="none" />
    <path d="M403 336.5l6.5 3.6v7.2l-6.5 3.6-6.5-3.6v-7.2zM403 439l6.5 3.6v7.2l-6.5 3.6-6.5-3.6v-7.2z" stroke="#0c5a0c" fill="none" />
    <circle cx="534" cy="149" r="7" stroke="#0c5a0c" fill="none" />
    <circle cx="906.7" cy="149" r="7" stroke="#0c5a0c" fill="none" />
    <circle cx="534" cy="452" r="7" stroke="#0c5a0c" fill="none" />
    <circle cx="906.7" cy="452" r="7" stroke="#1c6a30" fill="none" />
    <H x={398} y={344} c="#aaa">1-F</H>
    <H x={398} y={446} c="#aaa">1-E</H>
    <H x={904} y={149} c="#999">3</H>
    <H x={904} y={452} c="#ccc">3</H>

    {/* leaders */}
    <path d="M636 199H715M593 265.7H641M450 359.7H529M610 451.7H641M754 265.7H790M977 272H1014M1015 194H1050M754 442.7H790M978 442.7H1014M775 142V208" stroke="#a09a20" strokeWidth=".8" fill="none" />

    {/* notes */}
    <V x={441} y={197} c="#c8c8c8">6700</V>
    <V x={441} y={405} c="#c8c8c8">2200</V>
    <V x={522} y={261} c={CAD_P}>3C20</V>
    <V x={522} y={447} c={CAD_B}>3C20</V>
    <V x={550} y={147} c={CAD_B}>3C20</V>
    <V x={643} y={196}>L2(1A)  200x500</V>
    <V x={658} y={196}>A8@200(2)</V>
    <V x={672} y={196}>2C20</V>
    <V x={456.7} y={357}>KL1(3B)  200x600</V>
    <V x={471.7} y={357}>A8@100(2)</V>
    <V x={485.7} y={357}>2C20</V>
    <V x={549} y={353} c={CAD_B}>2C14</V>
    <V x={622.7} y={447}>L1a(1)</V>
    <V x={762} y={262}>L1a(1)</V>
    <V x={985} y={269}>L1a(1)</V>
    <V x={762} y={440}>L1a(1)</V>
    <V x={985.7} y={440}>L1a(1)</V>
    <V x={895} y={261} c={CAD_P}>6C20 3/3</V>
    <V x={922} y={163} c={CAD_P}>5C22</V>
    <V x={936.7} y={172} c={CAD_P}>A10@100</V>
    <V x={1018} y={190}>KL3(1A)  200</V>
    <V x={1033} y={193}>A8@100/200</V>
    <V x={1046.7} y={190}>2C22</V>
    <V x={922} y={353} c={CAD_P}>2C14</V>
    <V x={936.7} y={367} c={CAD_P}>200x400</V>
    <V x={895.7} y={460} c={CAD_B}>6C20 3/3</V>
    <H x={551} y={276} c={CAD_P}>5C18 3/2</H>
    <H x={690} y={303}>5C20 2/3</H>
    <H x={669} y={318}>A8@100/150(2)</H>
    <H x={551} y={379}>5C18 3/2</H>
    <H x={662.7} y={405.7}>5C20 2/3</H>
    <H x={779} y={150} c={CAD_Y}>L9(3)  200x500</H>
    <H x={779} y={165} c={CAD_Y}>A6@200(2)</H>
    <H x={779} y={179} c={CAD_Y}>2C20;2C20</H>
    <H x={869} y={201}>3C20</H>
    <H x={829} y={276}>6C18 3/3</H>
    <H x={986.7} y={303}>2C18</H>
    <H x={921.7} y={379} c={CAD_P}>6C18 3/3</H>
    <H x={918} y={453}>6C20 3/2</H>

    {/* coordinate marker */}
    <path d="M454 437L474 457" stroke="#0c5a0c" strokeWidth=".8" />
    <path d="M428 430V408" stroke="#00e000" strokeWidth="2" />
    <path d="M428 402l-2.5 7h5z" fill="#00e000" />
    <path d="M428 430H450" stroke="#f00000" strokeWidth="2" />
    <path d="M457 430l-7-2.5v5z" fill="#f00000" />
    <circle cx="428" cy="430" r="2" fill="#2090ff" />
    <H x={433} y={405} c="#00c000">Y</H>
    <H x={449} y={421} c="#b00000">X</H>
    <H x={420} y={430} c={CAD_B}>Z</H>
  </CadSvg>
);

const NavPanel = () => (
  <Col $w={97} $mr={2}>
    <Title>模块导航栏</Title>
    <NavBtn>工程设置</NavBtn>
    <NavBtn>绘图输入</NavBtn>
    <TreeTools><Glyph k="plus" size={10} /><Glyph k="minus" size={10} /></TreeTools>
    <TreeBox>
      <TreeList>
        {tree.map(([label, lv, x, y]) => (lv === 0 ? (
          <TreeRow key={label}>
            <Chevron $open={x} />
            <Glyph k="folder" size={9} />
            <TreeLabel>{label}</TreeLabel>
            {y && <><Glyph k="lines" size={7} /><NewMark>NEW</NewMark></>}
          </TreeRow>
        ) : (
          <TreeRow key={label} $lv={1}>
            <Glyph k={x} size={8} />
            <TreeLabel $sel={y === 'sel'}>{label}</TreeLabel>
          </TreeRow>
        )))}
      </TreeList>
      <VBar $w={10}>
        <Arrow>⌃</Arrow>
        <VThumb $top={56} $h={383} />
        <Arrow>⌄</Arrow>
      </VBar>
    </TreeBox>
    <HBar $h={11}>
      <Arrow>‹</Arrow>
      <HThumb $w={50} $ml={1} />
      <HEnd>›</HEnd>
    </HBar>
    <NavBtn>单构件输入</NavBtn>
    <NavBtn>报表预览</NavBtn>
  </Col>
);

const ManagerPanel = () => (
  <Col $w={213} $mr={3}>
    <Title>图纸管理</Title>
    <Tabs>
      <Tab>图纸文件列表</Tab>
      <Tab $on>图纸楼层对照表</Tab>
    </Tabs>
    <Col $w={242}>
      <ManagerBody>
        <SmallBtns>
          <SmallBtn $w={40}>识别楼层表</SmallBtn>
          <SmallBtn $w={33}>重新对应</SmallBtn>
          <SmallBtn $w={33}>清除对应</SmallBtn>
        </SmallBtns>
        <GridWrap>
          <GridMain>
            <Row $h={14.5}>
              <Head $w={floorCols[0]} $center />
              <Head $w={floorCols[1]} $center $on>图纸名称</Head>
              <Head $w={floorCols[2]} $center>对应楼层</Head>
              <Head $w={floorCols[3]} $center>对应构件</Head>
              <Head $w={floorCols[4]} $center>图纸比例</Head>
            </Row>
            {floorRows.map(([n, name, floor, part, green]) => (floor === null ? (
              <Row key={n}>
                <NumCell $w={floorCols[0]} $center>{n}</NumCell>
                <Cell $w={floorCols[1] + floorCols[2] + floorCols[3] + floorCols[4]}><Expand />{name}</Cell>
              </Row>
            ) : (
              <Row key={n} $green={green}>
                <NumCell $w={floorCols[0]} $center $on={n === 12}>{n}</NumCell>
                <Cell $w={floorCols[1]} $pl={6} $green={green} $ring={n === 12}>
                  <Dash $w={8} $c={green ? '#0a5a0a' : '#aaa'} />{name}
                </Cell>
                <Cell $w={floorCols[2]} $green={green}>{floor}</Cell>
                <Cell $w={floorCols[3]} $green={green}>{part}</Cell>
                <Cell $w={floorCols[4]} $green={green}>1:1</Cell>
              </Row>
            )))}
          </GridMain>
          <VBar $w={10} $bg="#f4f4f4">
            <Arrow>⌃</Arrow>
            <VThumb $top={41} $h={101} />
          </VBar>
        </GridWrap>
      </ManagerBody>
    </Col>
    <Col $w={287} $pt={6}>
      <Title active h={11}>CAD图层显示</Title>
      <LayerBody>
        <LayerRow><Chevron /><LayerBox $on />已提取的CAD图层</LayerRow>
        <LayerRow><Chevron /><LayerBox />CAD原始图层</LayerRow>
      </LayerBody>
    </Col>
  </Col>
);

const CenterPanel = () => (
  <Col $w={654} $mr={1} $pt={2}>
    <ToolRow $h={14} $mb={2}><Strip $pl={2}><Items list={row1} /></Strip></ToolRow>
    <ToolRow $h={16} $mb={1}>
      <Strip $pl={5}>
        <SelectBox $w={34}>第2层<Glyph k="dropDim" size={7} /></SelectBox>
        <Tool $w={2} />
        <Items list={row2} />
      </Strip>
    </ToolRow>
    <ToolRow $h={15} $mb={1}>
      <Strip $pl={2}><Items list={row3} /></Strip>
      <FloatGrip $ml={316}><Handle $w={1} /></FloatGrip>
    </ToolRow>
    <ToolRow $h={15} $mb={1}><Strip $pl={2}><Items list={row4} /></Strip></ToolRow>
    <ToolRow $h={15} $mb={1}><Strip $pl={2}><Items list={row5} /></Strip></ToolRow>
    <ToolRow $h={14}><Strip $pl={2}><Items list={row6} /></Strip></ToolRow>
    <Canvas><CadDrawing /></Canvas>
    <SnapRow>
      <Items list={snapLeft} />
      <SelectBox $w={36}>不偏移<Glyph k="drop" size={7} /></SelectBox>
      <Unit $w={13}>X=</Unit>
      <Spin w={33} v="0" />
      <Unit $w={16}>mm</Unit>
      <Unit $w={11}>Y=</Unit>
      <Spin w={33} v="0" />
      <Unit $w={15}>mm</Unit>
      <Sep $w={4} />
      <CheckBox />
      <Unit $w={20} $dark>&nbsp;旋转</Unit>
      <Spin w={40} v="0.000" />
      <Unit $w={8}>°</Unit>
    </SnapRow>
    <SteelArea>
      <GripCol><Glyph k="wallp" size={7} /></GripCol>
      <SteelMain>
        <SteelBar><Items list={steelTools} /></SteelBar>
        <SteelTable>
          <Row $h={12}>
            {steelCols.map(([t, w, on]) => <Head key={t} $w={w} $center $on={on}>{t}</Head>)}
          </Row>
          <Row $h={11}>
            {steelCols.map(([t, w, on], i) => (i === 0
              ? <NumCell key="n" $w={w} $center $on>▸*</NumCell>
              : <Cell key={t} $w={w} $bg={on ? '#d8e8f8' : undefined} />))}
          </Row>
          <HBar $auto>
            <Arrow>‹</Arrow>
            <HThumb $w={415} />
            <HEnd>›</HEnd>
          </HBar>
        </SteelTable>
      </SteelMain>
    </SteelArea>
  </Col>
);

const PropPanel = () => (
  <Col $w={154} $pt={2}>
    <Title h={11}>属性编辑器</Title>
    <PropBody>
      <Row $h={13}>
        <Head $w={13} $center />
        <Head $w={71} $center>属性名称</Head>
        <Head $w={50} $center $on>属性值</Head>
        <Head $w={18} $center>附加</Head>
      </Row>
      {props.map(([n, name, val, blue, cb]) => (
        <Row key={n} $h={11.13}>
          <NumCell $w={13} $center $on={n === 1}>{n}</NumCell>
          <Cell $w={71} $pl={12} $c={n === 1 ? '#bcdcff' : blue ? '#1a3ee8' : '#333'} $bg={n === 1 ? '#0a70d0' : undefined}>{name}</Cell>
          <Cell $w={50} $pl={2} $bg={n === 1 ? '#d8e8f8' : undefined}>{val}</Cell>
          <Cell $w={18} $center>{cb ? <CheckBox /> : null}</Cell>
        </Row>
      ))}
      {[[15, '其它属性'], [23, '锚固搭接'], [30, '显示样式']].map(([n, name]) => (
        <Row key={n} $h={11.13}>
          <NumCell $w={13} $center>{n}</NumCell>
          <Cell $w={71} $c="#999">&nbsp;＋&nbsp;&nbsp;{name}</Cell>
          <Cell $w={50} />
          <Cell $w={18} />
        </Row>
      ))}
    </PropBody>
  </Col>
);

const ImeIcon = ({ d, c = '#2b7fc8', f }) => (
  <svg width="8" height="8" viewBox="0 0 8 8"><path d={d} fill={f || 'none'} stroke={c} strokeWidth=".9" /></svg>
);

const Ime = () => (
  <ImeBar>
    <ImeLogo viewBox="0 0 16 16">
      <rect x="1" y="1" width="14" height="14" rx="3" fill="#ef5c1e" transform="rotate(-6 8 8)" />
      <path d="M11.5 5H6.5C4.5 5 4.5 8 6.5 8H9.5C11.5 8 11.5 11 9.5 11H4.5" stroke="#fff" strokeWidth="1.8" fill="none" />
    </ImeLogo>
    <ImeZh>中</ImeZh>
    <ImeIcon d="M1 2h1v1H1zM5 4h1v2H5z" f="#2b7fc8" />
    <ImeIcon d="M4 .6a3.4 3.4 0 1 0 .01 0zM2.6 3h.4M5 3h.4M2.5 5c1 .8 2 .8 3 0" />
    <ImeIcon d="M3 1h2v3.5H3zM1.5 4c0 3 5 3 5 0M4 6.5v1" f="#2b7fc8" />
    <ImeIcon d="M.5 1.5h7v5h-7zM2 3h4M2 5h4" f="#cfe4f8" />
    <ImeIcon d="M3 1h2v3H3zM1.5 4.5h5V7h-5z" c="#b8c0c8" f="#c8d0d8" />
    <ImeIcon d="M2.5 1L.5 2.5 1.5 4l1-.5V7h3V3.5l1 .5 1-1.5L5.5 1 4 1.6z" f="#2b7fc8" />
    <ImeIcon d="M1 1h2.5v2.5H1zM4.5 1H7v2.5H4.500zM1 4.500h2.500V7H1zM4.500 4.500H7V7H4.500z" f="#2b7fc8" />
  </ImeBar>
);

const App = () => (
  <Page>
    <GlobalStyle />
    <SideStripe />
    <Main>
      <Win>
        <MenuBar>
          {menus.map(([t, w]) => <MenuItem key={t} $w={w}>{t}</MenuItem>)}
          <MenuItem $w={14}><Glyph k="newdoc" size={10} /></MenuItem>
          <MenuItem $w={40}>新建变更 &nbsp;▾</MenuItem>
          <RightMenu>
            <Glyph k="user" size={10} />登录&nbsp;&nbsp;
            <Glyph k="bell" size={10} />&nbsp;&nbsp;
            <Glyph k="note" size={10} />&nbsp;我要建议
          </RightMenu>
        </MenuBar>
        <TopBar><Items list={topTools} /></TopBar>
        <Body>
          <NavPanel />
          <ManagerPanel />
          <CenterPanel />
          <PropPanel />
        </Body>
        <Ime />
        <Ellipse viewBox="0 0 132 50">
          <ellipse cx="66" cy="24" rx="62" ry="21" fill="none" stroke="#f01ee8" strokeWidth="2.5" transform="rotate(2 66 24)" />
        </Ellipse>
      </Win>
    </Main>
  </Page>
);

export default App;
